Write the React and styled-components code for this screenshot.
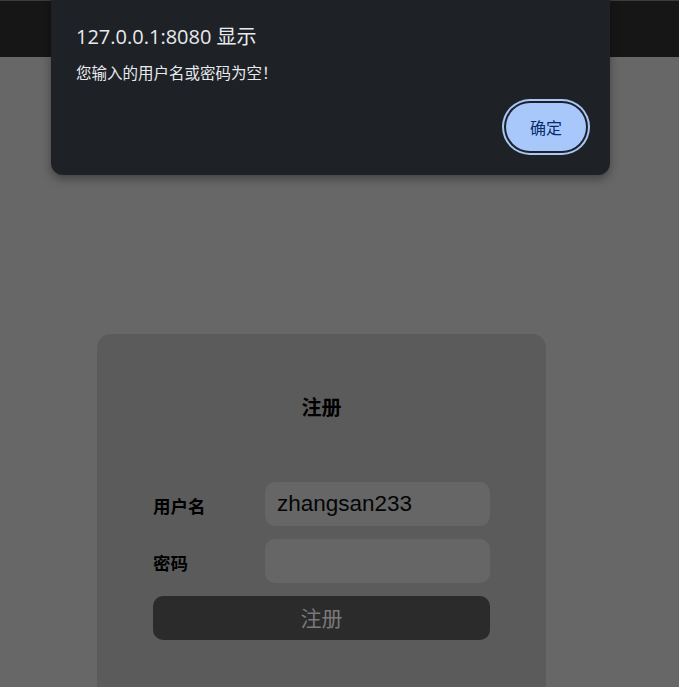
import React from 'react'
import styled, { createGlobalStyle } from 'styled-components'

const GlobalStyle = createGlobalStyle`
  html, body {
    margin: 0;
    padding: 0;
    background: #676767;
    overflow: hidden;
  }
  body {
    font-family: "Noto Sans", "Noto Sans CJK SC", sans-serif;
  }
`

const Page = styled.div`
  position: relative;
  width: 679px;
  height: 687px;
  background: #676767;
  overflow: hidden;
`

const TopBar = styled.div`
  height: 56px;
  background: #161616;
  border-top: 1px solid #3c3c3c;
`

const Card = styled.div`
  margin: 277px 0 0 97px;
  width: 449px;
  height: 400px;
  box-sizing: border-box;
  background: #5b5b5b;
  border-radius: 14px;
  padding: 59px 56px 0;
`

const Title = styled.h2`
  margin: 0;
  text-align: center;
  font-size: 20px;
  font-weight: 700;
  color: #000;
  font-family: "Noto Sans CJK SC", sans-serif;
  line-height: 28px;
`

const Form = styled.div`
  margin-top: 61px;
  display: flex;
  flex-direction: column;
  gap: 13px;
`

const Row = styled.div`
  display: flex;
  align-items: center;
`

const Label = styled.label`
  width: 112px;
  font-size: 17.5px;
  font-weight: 700;
  color: #000;
  font-family: "Noto Sans CJK SC", sans-serif;
  padding-top: ${p => p.$drop || 0}px;
`

const Input = styled.input`
  width: 225px;
  height: 44px;
  box-sizing: border-box;
  border: none;
  outline: none;
  border-radius: 10px;
  background: #666666;
  padding: 0 12px;
  font-size: 22.5px;
  color: #050505;
  font-family: "Liberation Sans", Arial, sans-serif;
`

const SubmitButton = styled.button`
  width: 337px;
  height: 44px;
  border: none;
  border-radius: 10px;
  background: #2b2b2b;
  color: #7a7a7a;
  font-size: 21px;
  line-height: 42px;
  padding: 0 0 2px;
  font-family: "Noto Sans CJK SC", sans-serif;
  cursor: pointer;
`

const Dialog = styled.div`
  position: absolute;
  left: 51px;
  top: -12px;
  width: 559px;
  height: 187px;
  box-sizing: border-box;
  background: #1e2126;
  border-radius: 12px;
  box-shadow: 0 4px 10px rgba(0, 0, 0, 0.35);
  padding: 35px 20px 0 25px;
  display: flex;
  flex-direction: column;
`

const DialogTitle = styled.div`
  font-size: 20px;
  color: #e8eaed;
  line-height: 28px;
  font-family: "Open Sans", "Noto Sans CJK SC", sans-serif;
`

const DialogMessage = styled.div`
  margin-top: 11px;
  font-size: 15.5px;
  color: #e8eaed;
  line-height: 20px;
  font-family: "Noto Sans CJK SC", sans-serif;
`

const DialogActions = styled.div`
  display: flex;
  justify-content: flex-end;
  margin-top: 21px;
`

const OkButton = styled.button`
  width: 80px;
  height: 48px;
  margin-right: 4px;
  border: none;
  border-radius: 24px;
  background: #a8c7fa;
  color: #062e6f;
  font-size: 16px;
  font-family: "Noto Sans CJK SC", sans-serif;
  box-shadow: 0 0 0 2px #1e2126, 0 0 0 4px #a8c7fa;
  cursor: pointer;
`

const App = () => {
  return (
    <Page>
      <GlobalStyle />
      <TopBar />
      <Card>
        <Title>注册</Title>
        <Form>
          <Row>
            <Label $drop={2}>用户名</Label>
            <Input defaultValue="zhangsan233" type="text" />
          </Row>
          <Row>
            <Label $drop={2}>密码</Label>
            <Input type="password" />
          </Row>
          <SubmitButton>注册</SubmitButton>
        </Form>
      </Card>
      <Dialog>
        <DialogTitle>127.0.0.1:8080 显示</DialogTitle>
        <DialogMessage>您输入的用户名或密码为空！</DialogMessage>
        <DialogActions>
          <OkButton>确定</OkButton>
        </DialogActions>
      </Dialog>
    </Page>
  )
}

export default App
